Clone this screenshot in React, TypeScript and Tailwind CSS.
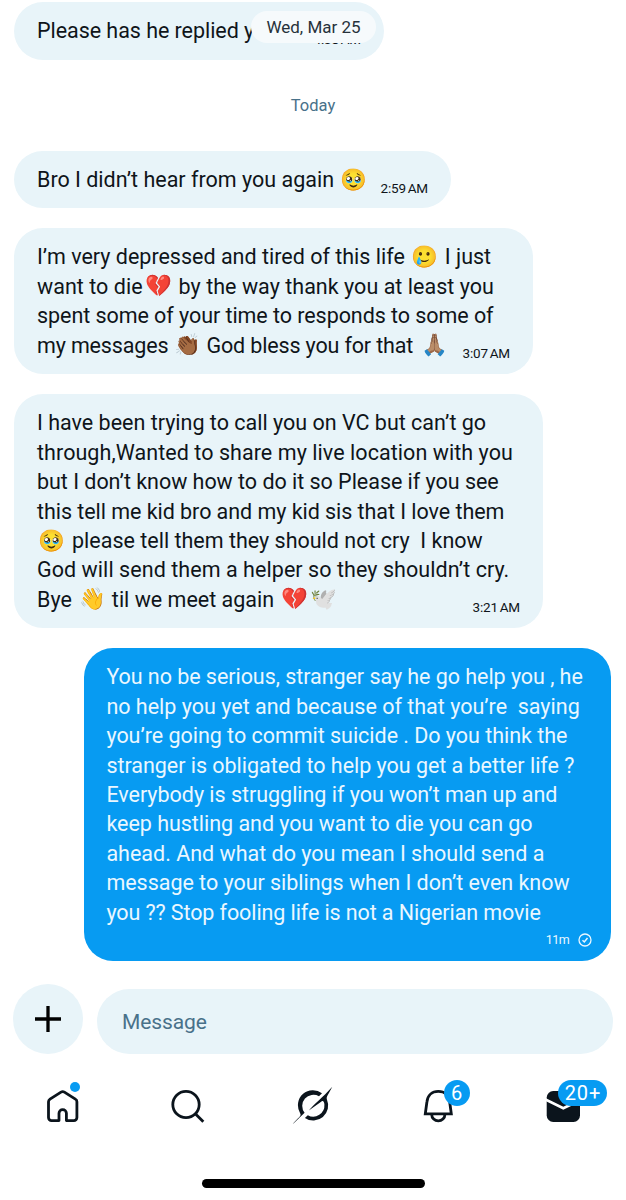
import React from 'react'

interface BubbleProps {
  className: string
  children: React.ReactNode
}

interface LineProps {
  className?: string
  time?: string
  children: React.ReactNode
}

function Bubble({ className, children }: BubbleProps) {
  return <div className={`rounded-[29px] pt-[14.4px] pb-[13px] ${className}`}>{children}</div>
}

function Line({ className = '', time, children }: LineProps) {
  return (
    <div className="flex items-end h-[29.4px] whitespace-pre">
      <span className={`flex items-center text-[21.5px] leading-[29.4px] ${className}`}>{children}</span>
      {time && <Time value={time} />}
    </div>
  )
}

function Time({ value }: { value: string }) {
  return (
    <span className="ml-auto text-[13.5px] leading-[14px] tracking-[-0.15px] [word-spacing:-1.5px]">{value}</span>
  )
}

function Emoji({ className = 'ml-[6px] mr-[7px]', children }: { className?: string; children: string }) {
  return (
    <span className={`inline-block w-[26px] shrink-0 text-[21.5px] leading-[28px] tracking-normal ${className}`}>
      {children}
    </span>
  )
}

function HomeIcon() {
  return (
    <svg className="w-[34px] h-[34px]" viewBox="0 0 34 34" fill="none" stroke="#0b141c" strokeWidth="2.8" strokeLinejoin="round">
      <path d="M13 31.6H5.5a3 3 0 0 1-3-3V12.7c0-1.2.6-2 1.5-2.6L15 3.1q1.7-1 3.4 0l11 7c1 .6 1.5 1.4 1.5 2.6v15.9a3 3 0 0 1-3 3h-7.5v-7.3a3.7 3.7 0 0 0-7.4 0Z" />
    </svg>
  )
}

function SearchIcon() {
  return (
    <svg className="w-[35px] h-[34px]" viewBox="0 0 35 34" fill="none" stroke="#0b141c" strokeWidth="2.8">
      <circle cx="16" cy="15.5" r="13.2" />
      <path d="M25.3 24.8l8 8" />
    </svg>
  )
}

function GrokIcon() {
  return (
    <svg className="w-[42px] h-[40px]" viewBox="0 0 42 40" fill="#0b141c">
      <path d="M.7 38.3C3.5 34.3 7.6 31.6 8.4 29.6C8.9 28.4 8.3 27.6 7.8 26.4A15 15 0 0 1 30 7.2L27 10.2A11.2 11.2 0 0 0 12.6 26.8Z" />
      <path d="M40.3.7L37.2 6.4C35.2 10 34.2 11.4 34.9 13.4A15 15 0 0 1 12.9 32L15.8 29.2A11.2 11.2 0 0 0 32.4 18.6C32.2 16 31.2 14.4 29.5 15.4L16.8 24.5C22 18.5 29 12.3 33 8.5Z" />
    </svg>
  )
}

function BellIcon() {
  return (
    <svg className="w-[31px] h-[34px]" viewBox="0 0 31 34" fill="none" stroke="#0b141c" strokeWidth="2.8">
      <path d="M2.3 24.8L3.9 13C4.6 6.5 9 2.4 15.3 2.4S26 6.5 26.7 13L28.3 24.8Z" />
      <path d="M8.7 25.5a6.6 6.4 0 0 0 13.2 0" />
    </svg>
  )
}

function MailIcon() {
  return (
    <svg className="w-[35px] h-[34px]" viewBox="0 0 35 34">
      <rect x=".7" y="2" width="33.3" height="31" rx="6.5" fill="#0b141c" />
      <path d="M-2 9.8L17.3 19.3L37 9.8" fill="none" stroke="#fff" strokeWidth="2.8" />
    </svg>
  )
}

export default function App() {
  return (
    <div className="w-[626px] h-[1200px] overflow-hidden bg-white font-[Roboto,sans-serif] text-[#0f1419] flex flex-col">
      {/* Messages */}
      <div className="flex flex-col items-start pt-[2px] pl-[14px]">
        <div className="relative">
          <Bubble className="w-[370px] h-[58px] px-[23px] bg-[#e8f4f9]">
            <Line className="tracking-[-0.05px]" time="4:38 AM">Please has he replied you</Line>
          </Bubble>
          {/* Floating date pill, sits over the end of the first message */}
          <div className="absolute left-[237px] top-[9px] w-[125px] h-[32px] rounded-full bg-[#f6fafc] text-center text-[17px] leading-[33px] text-[#27323b]">
            Wed, Mar 25
          </div>
        </div>

        <div className="w-[598px] h-[91px] pt-[2px] flex items-center justify-center text-[16.5px] text-[#48718a]">Today</div>

        <Bubble className="w-[437px] h-[57px] px-[23px] bg-[#e8f4f9]">
          <Line time="2:59 AM">Bro I didn’t hear from you again<Emoji>🥹</Emoji></Line>
        </Bubble>

        <Bubble className="mt-[20px] w-[519px] h-[146px] px-[23px] bg-[#e8f4f9]">
          <Line>I’m very depressed and tired of this life<Emoji className="ml-[6px] mr-[8px]">🥲</Emoji>I just</Line>
          <Line className="tracking-[0.03px]">want to die<Emoji className="ml-[2px] mr-[8px]">💔</Emoji>by the way thank you at least you</Line>
          <Line className="tracking-[-0.06px]">spent some of your time to responds to some of</Line>
          <Line className="tracking-[-0.15px]" time="3:07 AM">my messages<Emoji className="ml-[6px] mr-[6px]">👏🏾</Emoji>God bless you for that<Emoji className="ml-[8px]">🙏🏽</Emoji></Line>
        </Bubble>

        <Bubble className="mt-[20px] w-[529px] h-[234px] px-[23px] bg-[#e8f4f9]">
          <Line>I have been trying to call you on VC but can’t go</Line>
          <Line className="tracking-[0.06px]">through,Wanted to share my live location with you</Line>
          <Line className="tracking-[-0.03px]">but I don’t know how to do it so Please if you see</Line>
          <Line className="tracking-[-0.05px]">this tell me kid bro and my kid sis that I love them</Line>
          <Line><Emoji className="ml-[1px] mr-[8px]">🥹</Emoji>please tell them they should not cry  I know</Line>
          <Line className="tracking-[0.06px]">God will send them a helper so they shouldn’t cry.</Line>
          <Line time="3:21 AM">Bye<Emoji className="ml-[7px] mr-[7px]">👋</Emoji>til we meet again<Emoji className="ml-[7px] mr-[3px]">💔</Emoji><Emoji className="mx-0">🕊️</Emoji></Line>
        </Bubble>

        <Bubble className="mt-[20px] ml-[70px] w-[527px] h-[313px] pl-[22.4px] pr-[20px] bg-[#079bf2] text-[#eaf7ff]">
          <Line className="tracking-[-0.05px]">You no be serious, stranger say he go help you , he</Line>
          <Line>no help you yet and because of that you’re  saying</Line>
          <Line className="tracking-[-0.03px]">you’re going to commit suicide . Do you think the</Line>
          <Line className="tracking-[-0.03px]">stranger is obligated to help you get a better life ?</Line>
          <Line className="tracking-[-0.03px]">Everybody is struggling if you won’t man up and</Line>
          <Line className="tracking-[-0.03px]">keep hustling and you want to die you can go</Line>
          <Line>ahead. And what do you mean I should send a</Line>
          <Line className="tracking-[-0.03px]">message to your siblings when I don’t even know</Line>
          <Line className="tracking-[-0.1px]">you ?? Stop fooling life is not a Nigerian movie</Line>
          <div className="flex items-center justify-end gap-[9px] h-[26px] -mr-[1px] text-[12.5px] tracking-[-0.6px]">
            <span>11m</span>
            <svg className="w-[14px] h-[14px]" viewBox="0 0 14 14" fill="none" stroke="currentColor" strokeWidth="1.3">
              <circle cx="7" cy="7" r="6" />
              <path d="M4.5 7.3l1.8 1.7L9.5 5" strokeWidth="1.5" />
            </svg>
          </div>
        </Bubble>
      </div>

      {/* Composer */}
      <div className="flex items-end gap-[14px] mt-[23px] pl-[13px]">
        <div className="w-[70px] h-[70px] rounded-full bg-[#e8f4f9] flex items-center justify-center">
          <svg className="w-[26px] h-[26px]" viewBox="0 0 26 26" stroke="#000" strokeWidth="3.3">
            <path d="M13 0v26M0 13h26" />
          </svg>
        </div>
        <div className="w-[516px] h-[65px] rounded-full bg-[#e8f4f9] flex items-center pl-[25px] pt-[2px] text-[21px] tracking-[-0.1px] text-[#48718a]">
          Message
        </div>
      </div>

      {/* Tab bar */}
      <nav className="grid grid-cols-5 h-[40px] mt-[32px] items-center">
        <div className="flex justify-center">
          <div className="relative">
            <HomeIcon />
            <span className="absolute left-[24px] top-[-7px] w-[10px] h-[10px] rounded-full bg-[#079bf2]" />
          </div>
        </div>
        <div className="flex justify-center"><SearchIcon /></div>
        <div className="flex justify-center"><GrokIcon /></div>
        <div className="flex justify-center">
          <div className="relative">
            <BellIcon />
            <span className="absolute left-[21px] top-[-9px] w-[26px] h-[26px] rounded-full bg-[#079bf2] text-center text-[20px] leading-[26px] text-white">6</span>
          </div>
        </div>
        <div className="flex justify-center">
          <div className="relative">
            <MailIcon />
            <span className="absolute left-[12px] top-[-9px] w-[49px] h-[26px] rounded-full bg-[#079bf2] pl-[1px] text-center text-[20px] leading-[26px] tracking-[0.9px] text-white">20+</span>
          </div>
        </div>
      </nav>

      {/* Home indicator */}
      <div className="mt-[53px] ml-[202px] w-[223px] h-[9px] rounded-full bg-black" />
    </div>
  )
}
